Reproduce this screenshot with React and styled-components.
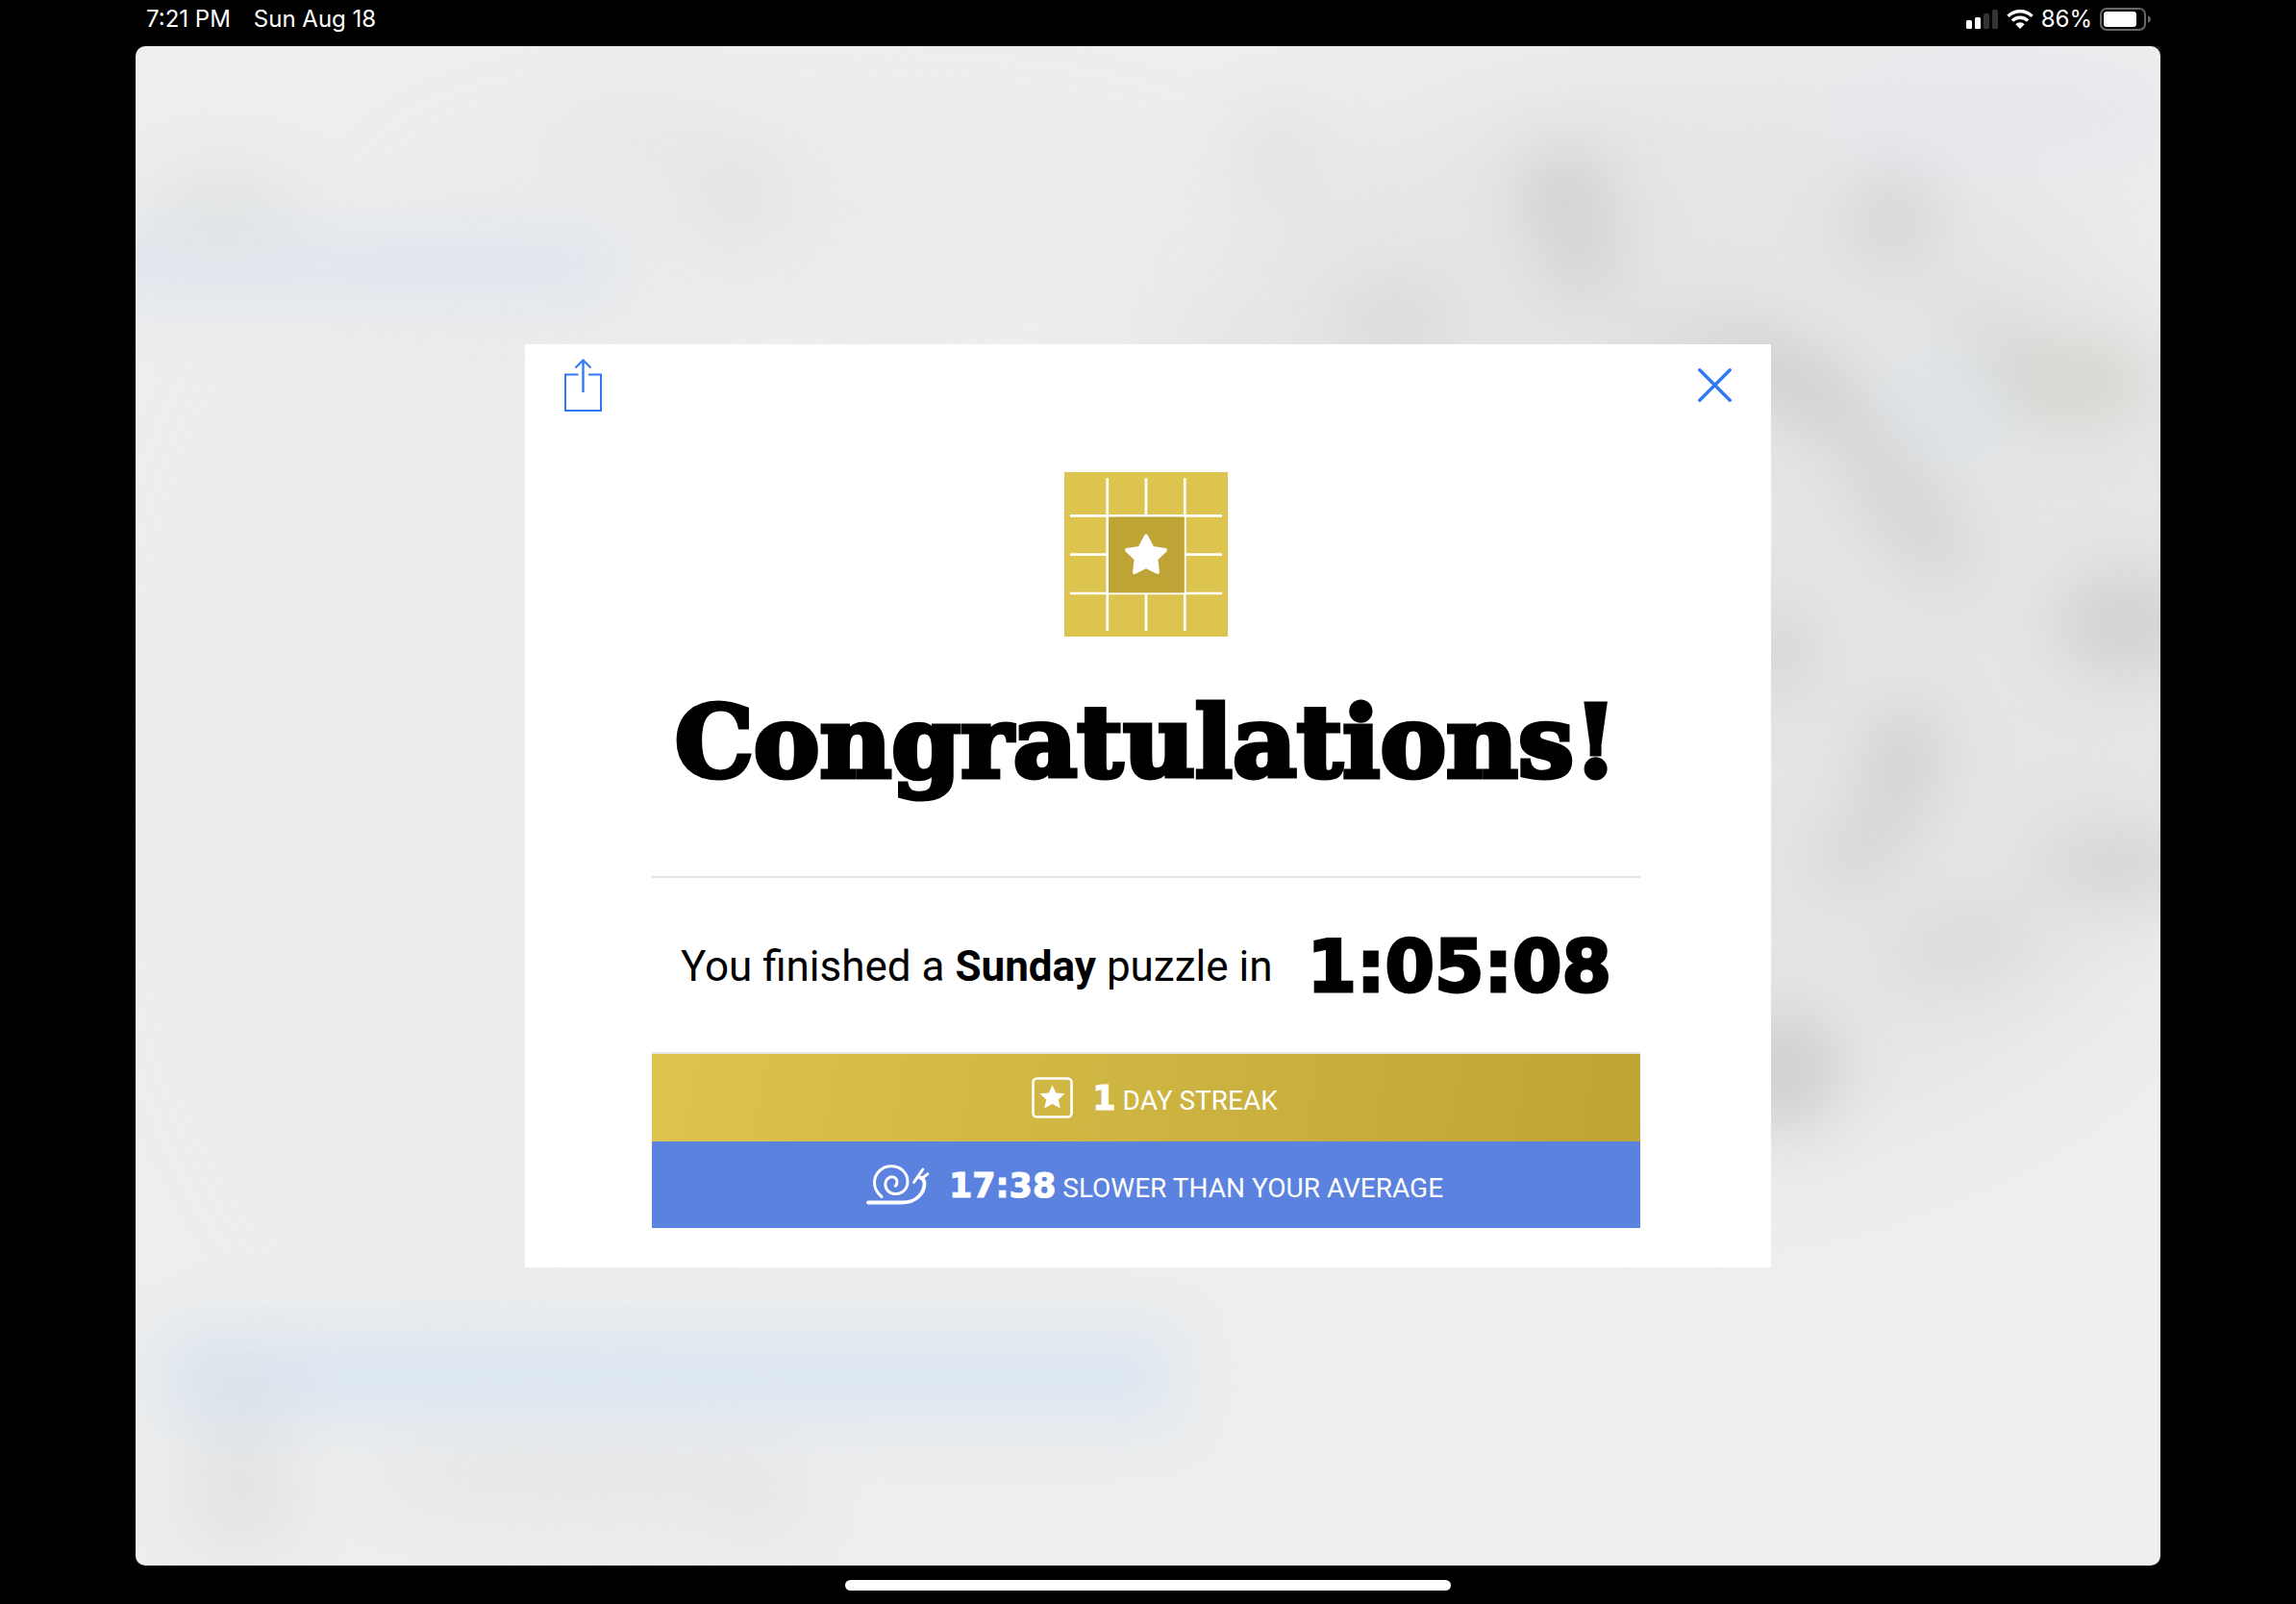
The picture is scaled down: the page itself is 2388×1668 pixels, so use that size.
import React from "react";
import styled, { createGlobalStyle } from "styled-components";

const GlobalStyle = createGlobalStyle`
  *, *::before, *::after { box-sizing: border-box; }
  body { margin: 0; background: #000; }
`;

const sans = `Roboto, "Liberation Sans", Arial, sans-serif`;
const numerals = `"DejaVu Sans", sans-serif`;

const Screen = styled.div`
  min-height: 100vh;
  display: flex;
  flex-direction: column;
  background: #000;
  font-family: ${sans};
`;

const StatusBar = styled.header`
  height: 48px;
  padding: 0 150px 8px 152px;
  display: flex;
  align-items: center;
  justify-content: space-between;
  color: #fff;
  font: 400 24px/40px Inter, sans-serif;
`;

const StatusGroup = styled.div`
  display: flex;
  align-items: center;
  gap: ${(p) => p.$gap}px;
`;

const AppWindow = styled.main`
  position: relative;
  flex: 1;
  margin: 0 141px;
  display: grid;
  place-items: center;
  overflow: hidden;
  border-radius: 10px;
  background: #eee;
`;

const Backdrop = styled.svg`
  position: absolute;
  inset: 0;
  width: 100%;
  height: 100%;
`;

const Dialog = styled.section`
  position: relative;
  width: 1296px;
  max-width: 100%;
  background: #fff;
  color: #000;
`;

const Toolbar = styled.div`
  height: 84px;
  padding: 0 37px;
  display: flex;
  align-items: center;
  justify-content: space-between;
`;

const IconButton = styled.button`
  display: flex;
  padding: 4px;
  border: 0;
  background: none;
  color: #3079f6;
  cursor: pointer;
`;

const Body = styled.div`
  padding: 49px 136px 41px 132px;
  display: flex;
  flex-direction: column;
`;

const BadgeIcon = styled.svg`
  align-self: center;
`;

const Title = styled.h1`
  margin: 0;
  padding-top: 50px;
  height: 249px;
  text-align: center;
  white-space: nowrap;
  font: 700 103px/120px "DejaVu Serif", serif;
  -webkit-text-stroke: 5px #000;
`;

const Summary = styled.div`
  height: 185px;
  padding-top: 3px;
  display: flex;
  align-items: center;
  justify-content: center;
  gap: 36px;
  border-top: 2px solid #e5e5e5;
  border-bottom: 2px solid #e5e5e5;
  white-space: nowrap;
`;

const Sentence = styled.p`
  margin: 0;
  font-size: 44px;
  line-height: 56px;
`;

const Time = styled.time`
  font: 700 74px/88px ${numerals};
  -webkit-text-stroke: 3px #000;
`;

const Stat = styled.div`
  height: ${(p) => p.$height}px;
  padding-left: 18px;
  display: flex;
  align-items: center;
  justify-content: center;
  gap: 20px;
  background: ${(p) => p.$background};
  color: #fff;
`;

const StatText = styled.p`
  margin: 0;
  padding-top: 4px;
  font-size: 28px;
  line-height: 44px;
  text-transform: uppercase;
`;

const StatValue = styled.strong`
  font: 700 35px/44px ${numerals};
  -webkit-text-stroke: 1px #fff;
`;

const HomeBar = styled.footer`
  height: 40px;
  display: flex;
  align-items: center;
  justify-content: center;
`;

const HomeIndicator = styled.div`
  width: 630px;
  height: 11px;
  border-radius: 6px;
  background: #fff;
`;

const shapes = [
  // [cx, cy, rx, ry, colour, rotation]
  [1600, 590, 620, 560, "#e5e5e5", 0],
  [350, 760, 310, 560, "#ececec", 0],
  [700, 170, 420, 80, "#ebebeb", 0],
];

const blobs = [
  [90, 165, 80, 40, "#e2e4e4", 0],
  [520, 100, 90, 40, "#e8e8e8", 0],
  [625, 155, 50, 54, "#e4e4e4", 0],
  [1190, 120, 50, 60, "#e4e4e4", 0],
  [1940, 70, 190, 60, "#e6e8ee", 0],
  [1488, 157, 50, 50, "#d1d1d1", 0],
  [1505, 220, 44, 50, "#d5d5d5", 0],
  [1828, 180, 46, 54, "#d6d6d6", 0],
  [1310, 285, 60, 34, "#d8d8d8", 0],
  [1620, 310, 80, 30, "#dadada", 0],
  [1725, 350, 95, 38, "#d0d0d0", 30],
  [1840, 475, 105, 44, "#d6d6d6", 55],
  [1885, 375, 65, 46, "#dde4ea", 30],
  [1950, 310, 80, 30, "#dadada", 30],
  [2015, 350, 85, 42, "#d5d6d0", 0],
  [2070, 600, 72, 52, "#d1d1d1", 0],
  [1710, 630, 34, 50, "#d4d4d4", 0],
  [1835, 750, 40, 70, "#d2d2d2", 10],
  [1795, 835, 60, 38, "#d7d7d7", -30],
  [2060, 850, 85, 42, "#d6d6d6", 0],
  [1900, 935, 80, 40, "#dadada", -15],
  [1715, 1065, 56, 60, "#cecece", 20],
  [110, 1505, 60, 60, "#e3e3e3", 0],
  [460, 1490, 220, 40, "#e7e7e7", 0],
  [640, 1505, 60, 50, "#e7e7e7", 0],
];

function drawEllipse([cx, cy, rx, ry, fill, angle], i) {
  return (
    <ellipse key={i} cx={cx} cy={cy} rx={rx} ry={ry} fill={fill} transform={`rotate(${angle} ${cx} ${cy})`} />
  );
}

function BlurredPuzzle() {
  return (
    <Backdrop viewBox="0 0 2106 1580" preserveAspectRatio="none" aria-hidden="true">
      <defs>
        <filter id="wide" x="-30%" y="-30%" width="160%" height="160%" colorInterpolationFilters="sRGB">
          <feGaussianBlur stdDeviation="60" />
        </filter>
        <filter id="soft" x="-30%" y="-30%" width="160%" height="160%" colorInterpolationFilters="sRGB">
          <feGaussianBlur stdDeviation="32" />
        </filter>
      </defs>
      <g filter="url(#wide)">{shapes.map(drawEllipse)}</g>
      <g filter="url(#soft)">
        <rect x="-60" y="190" width="560" height="76" fill="#e0e6ee" />
        <rect x="25" y="1334" width="1060" height="98" fill="#dce7f1" />
        <ellipse cx="110" cy="1400" rx="64" ry="44" fill="#d9e2ea" />
        {blobs.map(drawEllipse)}
      </g>
    </Backdrop>
  );
}

function Signal() {
  return (
    <svg width="34" height="20" viewBox="0 0 34 20" fill="#fff" role="img" aria-label="Signal">
      <rect x="0" y="11" width="6" height="9" rx="1.5" />
      <rect x="9" y="8" width="6" height="12" rx="1.5" />
      <rect x="18" y="4" width="6" height="16" rx="1.5" fill="#333" />
      <rect x="27" y="0" width="6" height="20" rx="1.5" fill="#333" />
    </svg>
  );
}

function Wifi() {
  return (
    <svg width="28" height="20" viewBox="0 0 28 20" role="img" aria-label="Wi-Fi">
      <g fill="none" stroke="#fff" strokeWidth="3.4">
        <path d="M1.4 6.9 A18 18 0 0 1 26.6 6.9" />
        <path d="M5.9 11.6 A11.6 11.6 0 0 1 22.1 11.6" />
      </g>
      <path d="M14 20 L9.3 15.2 A6.8 6.8 0 0 1 18.7 15.2 Z" fill="#fff" />
    </svg>
  );
}

function Battery() {
  return (
    <svg width="54" height="24" viewBox="0 0 54 24" role="img" aria-label="Battery">
      <rect x="1" y="1" width="46" height="22" rx="6" fill="none" stroke="#666" strokeWidth="2" />
      <rect x="4" y="4" width="34" height="16" rx="3" fill="#fff" />
      <path d="M50 8 Q53 9.5 53 12 Q53 14.5 50 16 Z" fill="#666" />
    </svg>
  );
}

function ShareIcon() {
  return (
    <svg width="40" height="56" viewBox="0 0 40 56" fill="none" stroke="currentColor" strokeWidth="2">
      <path d="M14.5 17.5 H1 V55 H38 V17.5 H25" />
      <path d="M19.5 36 V3" strokeWidth="2.4" />
      <path d="M11.5 10.5 L19.5 2.5 L27.5 10.5" />
    </svg>
  );
}

function CloseIcon() {
  return (
    <svg width="35" height="35" viewBox="0 0 35 35" fill="none" stroke="currentColor" strokeWidth="3.4" strokeLinecap="round">
      <path d="M1.8 1.8 L33.2 33.2 M33.2 1.8 L1.8 33.2" />
    </svg>
  );
}

function PuzzleBadge() {
  return (
    <BadgeIcon width="170" height="171" viewBox="0 0 170 171" aria-hidden="true">
      <rect width="170" height="171" fill="#ddc44f" />
      <path
        d="M44.7 6.3 V165 M125.3 6.3 V165 M85 6.3 V45 M85 126 V165 M6 45.3 H164 M6 126 H164 M6 85.7 H45 M125 85.7 H164"
        stroke="#fff"
        strokeWidth="2.7"
      />
      <rect x="46" y="46.6" width="78.8" height="78.8" fill="#bea434" />
      <path
        d="M85 66.5 L91.5 79 L105 81 L95.3 90.2 L97 104 L85 98 L73 104 L74.7 90.2 L65 81 L78.5 79 Z"
        fill="#fff"
        stroke="#fff"
        strokeWidth="4"
        strokeLinejoin="round"
      />
    </BadgeIcon>
  );
}

function StreakIcon() {
  return (
    <svg width="43" height="43" viewBox="0 0 43 43" aria-hidden="true">
      <rect x="1.5" y="1.5" width="40" height="40" rx="4" fill="none" stroke="#fff" strokeWidth="2.6" />
      <path
        d="M21.5 8.5 L25.3 16.5 L34.5 17.3 L27.8 23.5 L29.8 32.6 L21.5 28 L13.2 32.6 L15.2 23.5 L8.5 17.3 L17.7 16.5 Z"
        fill="#fff"
      />
    </svg>
  );
}

function SnailIcon() {
  return (
    <svg width="66" height="42" viewBox="0 0 66 42" fill="none" stroke="#fff" strokeWidth="3" strokeLinecap="round" aria-hidden="true">
      <path d="M16 33.5 C10 28.5 8.5 24.5 8.5 19 C8.5 9 16.5 1.8 26 1.8 C36 1.8 43 9 43 17.5 C43 25.5 37.5 30.5 30.5 30.5 C24 30.5 19.8 26 19.8 20.5 C19.8 16 23 12.8 26.8 12.8 C30.6 12.8 32.4 16 32 19 C31.8 20.8 31.2 21.5 30.2 22.2" />
      <path d="M2 39.5 H38 C52 39.5 60.5 29.5 60.5 19.5 C60.5 16.5 59 14.8 56.5 13.8" strokeWidth="3.8" />
      <path d="M49.5 18.5 L58.8 5 M55.5 13.5 C58 14.5 60 13 63.8 9.8" />
    </svg>
  );
}

export default function App() {
  return (
    <>
      <GlobalStyle />
      <Screen>
        <StatusBar>
          <StatusGroup $gap={24}>
            <span>7:21 PM</span>
            <span>Sun Aug 18</span>
          </StatusGroup>
          <StatusGroup $gap={8}>
            <Signal />
            <Wifi />
            <span>86%</span>
            <Battery />
          </StatusGroup>
        </StatusBar>
        <AppWindow>
          <BlurredPuzzle />
          <Dialog role="dialog" aria-labelledby="dialog-title">
            <Toolbar>
              <IconButton type="button" aria-label="Share">
                <ShareIcon />
              </IconButton>
              <IconButton type="button" aria-label="Close">
                <CloseIcon />
              </IconButton>
            </Toolbar>
            <Body>
              <PuzzleBadge />
              <Title id="dialog-title">Congratulations!</Title>
              <Summary>
                <Sentence>
                  You finished a <b>Sunday</b> puzzle in
                </Sentence>
                <Time dateTime="PT1H5M8S">1:05:08</Time>
              </Summary>
              <Stat $height={91} $background="linear-gradient(100deg, #ddc44f, #bea434)">
                <StreakIcon />
                <StatText>
                  <StatValue>1</StatValue> Day streak
                </StatText>
              </Stat>
              <Stat $height={90} $background="#5b82de">
                <SnailIcon />
                <StatText>
                  <StatValue>17:38</StatValue> Slower than your average
                </StatText>
              </Stat>
            </Body>
          </Dialog>
        </AppWindow>
        <HomeBar>
          <HomeIndicator />
        </HomeBar>
      </Screen>
    </>
  );
}
